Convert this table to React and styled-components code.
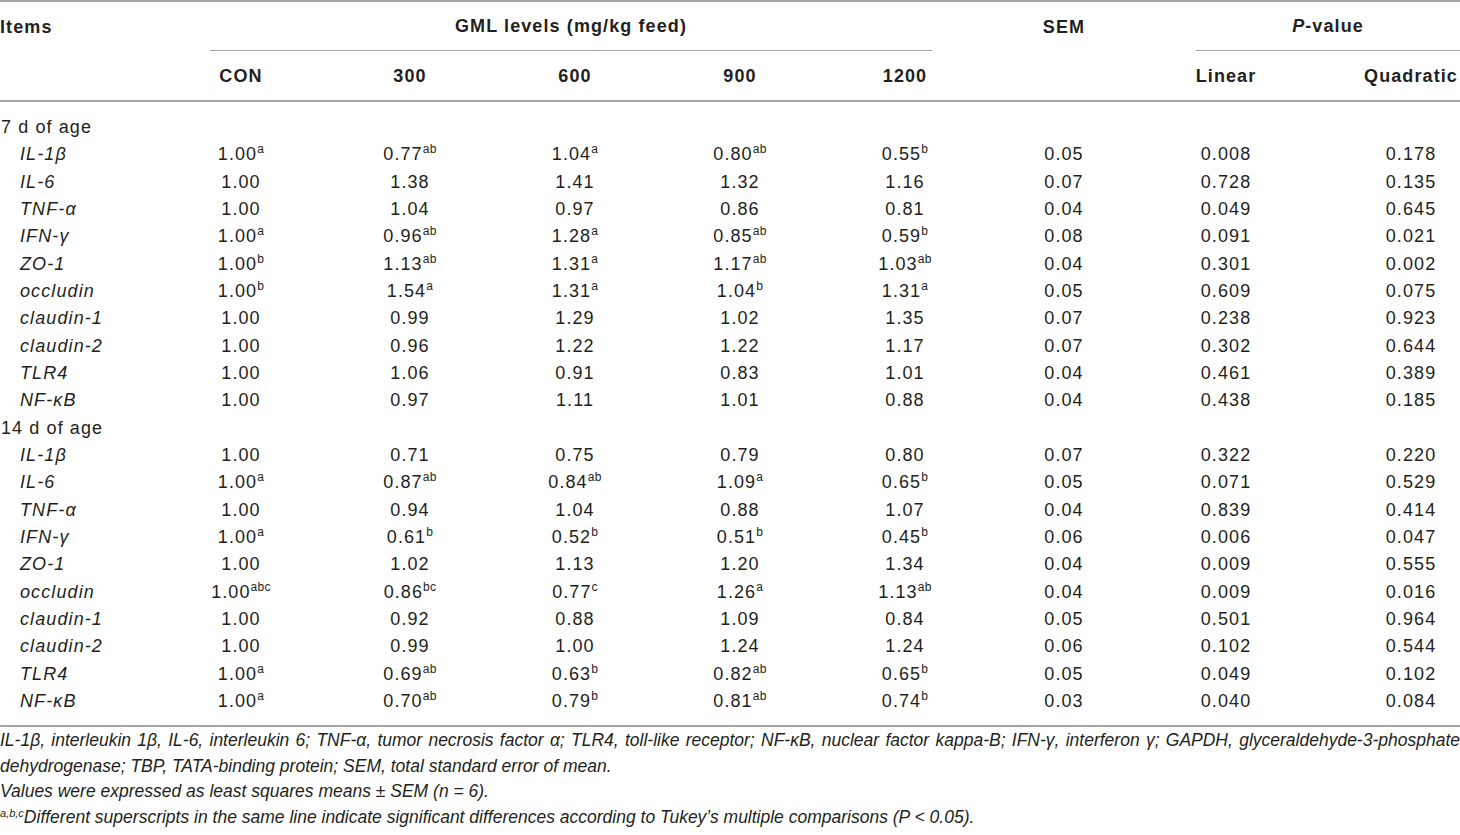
import styled, { createGlobalStyle } from "styled-components";

const GlobalStyle = createGlobalStyle`
  html, body {
    margin: 0;
    padding: 0;
    background: #fff;
  }
  body {
    font-family: "Liberation Sans", Arial, Helvetica, sans-serif;
    color: #231f20;
  }
`;

const COLS = "156px 170px 168px 162px 168px 162px 156px 168px 150px";

// rows: label, then 5 diet levels, SEM, linear, quadratic
// a value written as "1.00^ab" carries a superscript
const sections = [
  {
    title: "7 d of age",
    rows: [
      ["IL-1β", "1.00^a", "0.77^ab", "1.04^a", "0.80^ab", "0.55^b", "0.05", "0.008", "0.178"],
      ["IL-6", "1.00", "1.38", "1.41", "1.32", "1.16", "0.07", "0.728", "0.135"],
      ["TNF-α", "1.00", "1.04", "0.97", "0.86", "0.81", "0.04", "0.049", "0.645"],
      ["IFN-γ", "1.00^a", "0.96^ab", "1.28^a", "0.85^ab", "0.59^b", "0.08", "0.091", "0.021"],
      ["ZO-1", "1.00^b", "1.13^ab", "1.31^a", "1.17^ab", "1.03^ab", "0.04", "0.301", "0.002"],
      ["occludin", "1.00^b", "1.54^a", "1.31^a", "1.04^b", "1.31^a", "0.05", "0.609", "0.075"],
      ["claudin-1", "1.00", "0.99", "1.29", "1.02", "1.35", "0.07", "0.238", "0.923"],
      ["claudin-2", "1.00", "0.96", "1.22", "1.22", "1.17", "0.07", "0.302", "0.644"],
      ["TLR4", "1.00", "1.06", "0.91", "0.83", "1.01", "0.04", "0.461", "0.389"],
      ["NF-κB", "1.00", "0.97", "1.11", "1.01", "0.88", "0.04", "0.438", "0.185"],
    ],
  },
  {
    title: "14 d of age",
    rows: [
      ["IL-1β", "1.00", "0.71", "0.75", "0.79", "0.80", "0.07", "0.322", "0.220"],
      ["IL-6", "1.00^a", "0.87^ab", "0.84^ab", "1.09^a", "0.65^b", "0.05", "0.071", "0.529"],
      ["TNF-α", "1.00", "0.94", "1.04", "0.88", "1.07", "0.04", "0.839", "0.414"],
      ["IFN-γ", "1.00^a", "0.61^b", "0.52^b", "0.51^b", "0.45^b", "0.06", "0.006", "0.047"],
      ["ZO-1", "1.00", "1.02", "1.13", "1.20", "1.34", "0.04", "0.009", "0.555"],
      ["occludin", "1.00^abc", "0.86^bc", "0.77^c", "1.26^a", "1.13^ab", "0.04", "0.009", "0.016"],
      ["claudin-1", "1.00", "0.92", "0.88", "1.09", "0.84", "0.05", "0.501", "0.964"],
      ["claudin-2", "1.00", "0.99", "1.00", "1.24", "1.24", "0.06", "0.102", "0.544"],
      ["TLR4", "1.00^a", "0.69^ab", "0.63^b", "0.82^ab", "0.65^b", "0.05", "0.049", "0.102"],
      ["NF-κB", "1.00^a", "0.70^ab", "0.79^b", "0.81^ab", "0.74^b", "0.03", "0.040", "0.084"],
    ],
  },
];

const levels = ["CON", "300", "600", "900", "1200"];

function Value({ text }) {
  const [num, sup] = text.split("^");
  return (
    <>
      {num}
      {sup && <Sup>{sup}</Sup>}
    </>
  );
}

export default function App() {
  return (
    <Page>
      <GlobalStyle />
      <Head>
        <HeadCell $row={1} $col="1" $left>
          Items
        </HeadCell>
        <GroupCell $col="2 / 7">
          <GroupLabel $inset="0 54px">GML levels (mg/kg feed)</GroupLabel>
        </GroupCell>
        <HeadCell $row={1} $col="7">
          SEM
        </HeadCell>
        <GroupCell $col="8 / 10">
          <GroupLabel $inset="0 0 0 54px">
            <i>P</i>-value
          </GroupLabel>
        </GroupCell>
        {levels.map((lv, i) => (
          <HeadCell key={lv} $row={2} $col={String(i + 2)}>
            {lv}
          </HeadCell>
        ))}
        <HeadCell $row={2} $col="8">
          Linear
        </HeadCell>
        <HeadCell $row={2} $col="9" $last>
          Quadratic
        </HeadCell>
      </Head>

      <Body>
        {sections.map((sec) => (
          <div key={sec.title}>
            <Row>
              <SectionTitle>{sec.title}</SectionTitle>
            </Row>
            {sec.rows.map((r) => (
              <Row key={sec.title + r[0]}>
                <Label>{r[0]}</Label>
                {r.slice(1).map((v, i) => (
                  <Cell key={i} $last={i === 7}>
                    <Value text={v} />
                  </Cell>
                ))}
              </Row>
            ))}
          </div>
        ))}
      </Body>

      <Notes>
        <NoteLine $justify>
          IL-1β, interleukin 1β, IL-6, interleukin 6; TNF-α, tumor necrosis factor α;
          TLR4, toll-like receptor; NF-κB, nuclear factor kappa-B; IFN-γ, interferon γ;
          GAPDH, glyceraldehyde-3-phosphate
        </NoteLine>
        <NoteLine>
          dehydrogenase; TBP, TATA-binding protein; SEM, total standard error of mean.
        </NoteLine>
        <NoteLine>Values were expressed as least squares means ± SEM (n = 6).</NoteLine>
        <NoteLine>
          <NoteSup>a,b,c</NoteSup>Different superscripts in the same line indicate
          significant differences according to Tukey’s multiple comparisons (P &lt; 0.05).
        </NoteLine>
      </Notes>
    </Page>
  );
}

const Page = styled.div`
  width: 1460px;
  height: 835px;
  overflow: hidden;
  font-size: 18px;
  letter-spacing: 1.1px;
`;

const Head = styled.div`
  display: grid;
  grid-template-columns: ${COLS};
  grid-template-rows: 49px 49px;
  border-top: 2px solid #a3a3a3;
  border-bottom: 2px solid #a3a3a3;
  font-weight: bold;
`;

const HeadCell = styled.div`
  grid-row: ${(p) => p.$row};
  grid-column: ${(p) => p.$col};
  display: flex;
  align-items: center;
  justify-content: ${(p) => (p.$left ? "flex-start" : "center")};
  padding-left: ${(p) => (p.$last ? "52px" : "0")};
  padding-top: 1px;
`;

const GroupCell = styled.div`
  grid-row: 1;
  grid-column: ${(p) => p.$col};
  display: flex;
  flex-direction: column;
`;

const GroupLabel = styled.div`
  flex: 1;
  margin: ${(p) => p.$inset};
  display: flex;
  align-items: center;
  justify-content: center;
  border-bottom: 1.5px solid #a3a3a3;
  padding-top: 1px;
`;

const Body = styled.div`
  padding: 12px 0 10px;
  border-bottom: 2px solid #a3a3a3;
`;

const Row = styled.div`
  display: grid;
  grid-template-columns: ${COLS};
  height: 27.33px;
  align-items: center;
  white-space: nowrap;
`;

const SectionTitle = styled.div`
  grid-column: 1 / 4;
  padding-left: 1px;
`;

const Label = styled.div`
  font-style: italic;
  padding-left: 20px;
`;

const Cell = styled.div`
  text-align: center;
  padding-left: ${(p) => (p.$last ? "52px" : "0")};
`;

const Sup = styled.sup`
  font-size: 12px;
  letter-spacing: 0.3px;
  line-height: 0;
  vertical-align: 7px;
`;

const Notes = styled.div`
  padding-top: 1px;
  font-style: italic;
  font-size: 17.5px;
  letter-spacing: 0;
  line-height: 25.5px;
`;

const NoteLine = styled.div`
  white-space: ${(p) => (p.$justify ? "normal" : "nowrap")};
  text-align: ${(p) => (p.$justify ? "justify" : "left")};
  text-align-last: ${(p) => (p.$justify ? "justify" : "auto")};
  height: 25.5px;
  overflow: hidden;
`;

const NoteSup = styled.sup`
  font-size: 11px;
  line-height: 0;
  vertical-align: 6px;
`;
